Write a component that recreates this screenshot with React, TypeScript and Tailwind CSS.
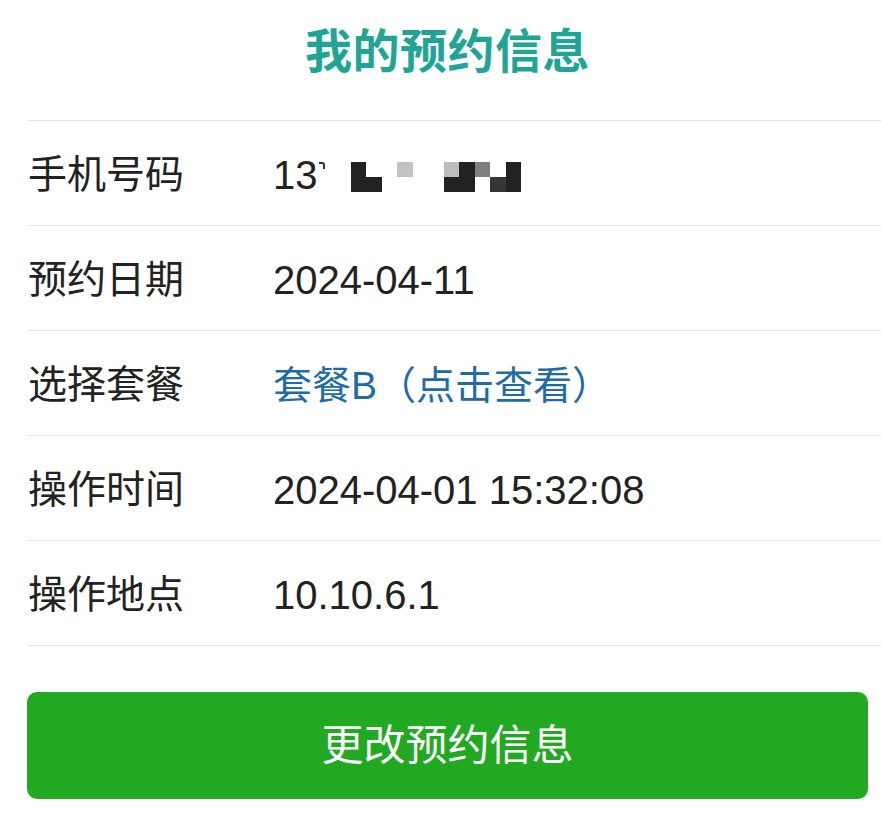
import React from 'react'

const font = 'font-["Liberation_Sans","Noto_Sans_CJK_SC",sans-serif]'

// mosaic cells for the masked phone number: [top, bottom] per column
const dark = 'bg-[#222222]'
const cells: [string, string][] = [
  [dark, dark],
  ['', dark],
  ['', ''],
  ['bg-[#c2c2c2]', ''],
  ['', ''],
  ['', ''],
  ['bg-[#bdbdbd]', dark],
  [dark, dark],
  ['bg-[#7e7e7e]', ''],
  ['', 'bg-[#363636]'],
  [dark, dark],
]

function MaskedPhone() {
  return (
    <div className="flex items-center">
      <span>13</span>
      <span className="w-[6px] h-[7px] -mt-[20px] ml-[1px] mr-[26px] border-t-[2px] border-r-[2px] border-[#333] rounded-tr-[3px]" />
      <div className="grid grid-cols-[repeat(11,15.5px)] grid-rows-[15px_15px] mt-[4px]">
        {cells.map(([top, _b], i) => (
          <span key={'t' + i} className={top} />
        ))}
        {cells.map(([_t, bottom], i) => (
          <span key={'b' + i} className={bottom} />
        ))}
      </div>
    </div>
  )
}

interface RowProps {
  label: string
  children: React.ReactNode
}

function Row({ label, children }: RowProps) {
  return (
    <div className="h-[105px] border-t border-[#e6e6e6] flex items-center pt-[4px]">
      <div className="w-[246px] pl-[1px] text-[39px] text-[#222]">{label}</div>
      <div className="text-[40px] text-[#222]">{children}</div>
    </div>
  )
}

export default function App() {
  return (
    <div className={`w-[881px] h-[818px] bg-white ${font}`}>
      <div className="h-[120px] flex items-center justify-center pb-[16px] pl-[14px]">
        <h1 className="text-[47px] font-bold text-[#1fa595] tracking-[0.5px]">我的预约信息</h1>
      </div>

      <div className="ml-[27px] border-b border-[#e6e6e6]">
        <Row label="手机号码">
          <MaskedPhone />
        </Row>
        <Row label="预约日期">2024-04-11</Row>
        <Row label="选择套餐">
          <span className="text-[39px] text-[#1e6ba6]">套餐B（点击查看）</span>
        </Row>
        <Row label="操作时间">2024-04-01 15:32:08</Row>
        <Row label="操作地点">10.10.6.1</Row>
      </div>

      <button className="mt-[46px] ml-[27px] w-[841px] h-[107px] rounded-[10px] bg-[#21a922] text-white text-[42px] flex items-center justify-center">
        更改预约信息
      </button>
    </div>
  )
}
